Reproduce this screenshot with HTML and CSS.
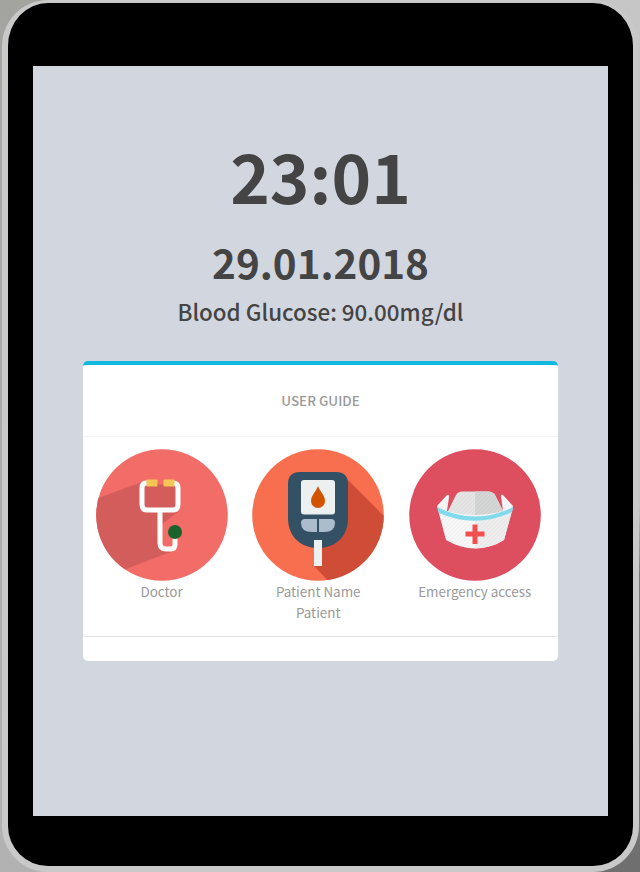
FILE: index.html
```html
<!DOCTYPE html>
<html lang="en">
<head>
<meta charset="utf-8">
<title>User guide</title>
<link rel="stylesheet" href="styles.css">
</head>
<body>
<div class="tablet">
  <main class="screen">
    <div class="time"><span>23:01</span></div>
    <div class="date"><span>29.01.2018</span></div>
    <div class="glucose"><span>Blood Glucose: 90.00mg/dl</span></div>
    <section class="card">
      <h1 class="card-title">USER GUIDE</h1>
      <div class="options">
        <div class="option">
          <svg class="icon" viewBox="0 0 132 132">
            <defs><clipPath id="disc"><circle cx="66" cy="66" r="65.8"/></clipPath></defs>
            <g clip-path="url(#disc)">
              <rect width="132" height="132" fill="#f26c68"/>
              <path d="M0 50 46 33 83 38V62L65 76V100L77 102 25 122 0 112Z" fill="#d25d5a"/>
            </g>
            <path d="M52 34H50Q46 34 46 39V55Q46 61 51 61H77Q82 61 82 55V39Q82 34 77 34H76M64 62V94Q64 100 70 100H75Q79 100 79 95V87" fill="none" stroke="#fff" stroke-width="5"/>
            <rect x="50.500" y="30.500" width="11" height="7" rx="1" fill="#f5c653"/>
            <rect x="67.500" y="30.500" width="11" height="7" rx="1" fill="#f5c653"/>
            <circle cx="79" cy="83" r="7" fill="#1b632d"/>
          </svg>
          <span>Doctor</span>
        </div>
        <div class="option">
          <svg class="icon" viewBox="0 0 132 132">
            <g clip-path="url(#disc)">
              <rect width="132" height="132" fill="#f86f50"/>
              <path d="M92 27 140 75V140H84L62 117Z" fill="#cf4d36"/>
            </g>
            <path d="M48 23H84Q96 23 96 35V69C96 87 84 99 66 99C48 99 36 87 36 69V35Q36 23 48 23Z" fill="#345064"/>
            <rect x="49" y="31" width="34" height="34.500" rx="3" fill="#ecf0f1"/>
            <path d="M66 37C68 43 73 46 73 52A7 7 0 0 1 59 52C59 46 64 43 66 37Z" fill="#d35400"/>
            <path d="M53 70H65V83H60Q49 83 49 74Q49 70 53 70ZM67 70H79Q83 70 83 74Q83 83 72 83H67Z" fill="#abbccd"/>
            <path d="M62 91H70V117H62Z" fill="#ecf0f1"/>
          </svg>
          <span>Patient Name<br>Patient</span>
        </div>
        <div class="option">
          <svg class="icon" viewBox="0 0 132 132">
            <defs><pattern id="weave" width="4" height="4" patternUnits="userSpaceOnUse"><path d="M-1 1 1-1M0 4 4 0M3 5 5 3" stroke="#000" stroke-opacity=".03"/></pattern></defs>
            <circle cx="66" cy="66" r="65.800" fill="#df4f60"/>
            <path d="M38 64 47 46Q49 42.500 53 42.500H79Q84 42.500 86 46L95 64 67 72Z" fill="#e4e4e4"/>
            <path d="M66 42.500H79Q84 42.500 86 46L95 64 66 72Z" fill="#d4d5d5"/>
            <path d="M28 57 38 46Q40 45 40 48L38 62Q66 70 94 62L92 47Q92 45 94 46L104 57 95 91Q66 108 37 91Z" fill="#f7f7f7"/>
            <path d="M66 70Q86 70 104 59L95 91Q83 99 66 99.500Z" fill="#ededed"/>
            <path d="M28 58Q66 77 104 58L103 63Q66 80 30 64Z" fill="#82dced"/>
            <path d="M63.500 75.500H68.500V82.500H75.500V87.500H68.500V95H63.500V87.500H56.500V82.500H63.500Z" fill="#f35052"/>
            <circle cx="66" cy="66" r="65.800" fill="url(#weave)"/>
          </svg>
          <span>Emergency access</span>
        </div>
      </div>
    </section>
  </main>
</div>
</body>
</html>
```
FILE: styles.css
```css
* { box-sizing: border-box; }

body {
  margin: 0;
  height: 872px;
  padding-left: 2px;
  overflow: hidden;
  font-family: "Noto Sans CJK SC", "Noto Sans", sans-serif;
  text-align: center;
  background:
    linear-gradient(to bottom, #c6c6c6 0, #c2c2c2 58%, #777 66%, #6f6f6f 100%) right / 320px 100% no-repeat,
    linear-gradient(to bottom, #a3a3a0, #b2b2b2);
}

.tablet {
  width: 637px;
  height: 872px;
  padding: 63px 25px 50px;
  border: 6px solid #c9c9c9;
  border-top-width: 3px;
  border-radius: 46px;
  background: #000;
}

.screen {
  width: 575px;
  height: 750px;
  padding: 64px 50px 0;
  color: #444;
  background: #d2d6df;
  white-space: nowrap;
}

.time {
  font-size: 67.3px;
  font-weight: 700;
  line-height: 90px;
}

.date {
  margin-top: 17px;
  font-size: 40.4px;
  font-weight: 700;
  line-height: 50px;
}

.glucose {
  margin-top: 9px;
  font-size: 22.4px;
  font-weight: 500;
  line-height: 30px;
}

.card {
  height: 300px;
  margin-top: 35px;
  border-top: 4px solid #12b9de;
  border-radius: 5px;
  background: #fff;
  color: #999;
}

.card-title {
  height: 72px;
  margin: 0;
  border-bottom: 1px solid #f4f4f4;
  font-size: 13.4px;
  font-weight: 500;
  line-height: 71px;
}

.options {
  display: grid;
  grid-template-columns: repeat(3, 156.6px);
  height: 199px;
  padding: 12px 0 0 0.3px;
  border-radius: 0 0 3px 3px;
  box-shadow: 0 1px 1px rgba(0, 0, 0, 0.12);
}

.option {
  display: flex;
  flex-direction: column;
  align-items: center;
  font-size: 13.4px;
  line-height: 21px;
}

.icon {
  display: block;
  width: 132px;
  height: 132px;
}
```
